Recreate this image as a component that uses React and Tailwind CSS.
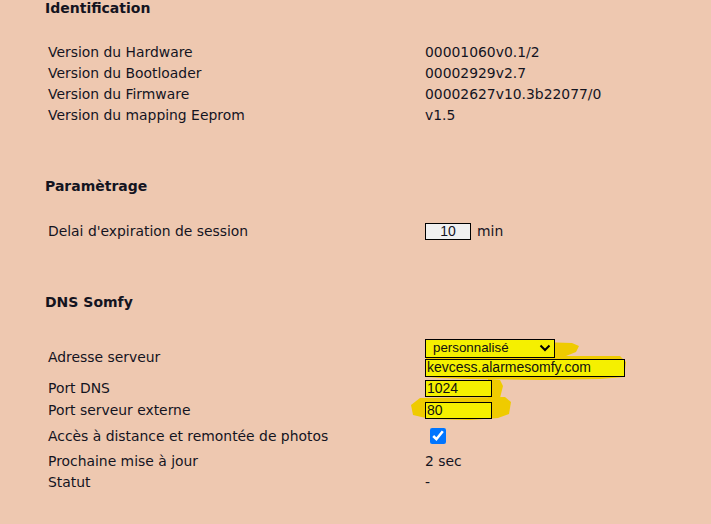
import React from "react";

const Heading = ({ children, className = "" }) => (
  <div className={`h-4 leading-4 pl-[45px] font-bold text-[14px] ${className}`}>
    {children}
  </div>
);

const Row = ({ label, children, className = "h-[21px]" }) => (
  <div className={`flex items-center ${className}`}>
    <div className="w-[425px] pl-[48px] shrink-0 whitespace-nowrap">{label}</div>
    <div className="flex-1">{children}</div>
  </div>
);

const inputBase =
  "block border border-black bg-[#f5f000] text-[13.33px] text-[#111] outline-none px-px";

export default function App() {
  const versions = [
    ["Version du Hardware", "00001060v0.1/2"],
    ["Version du Bootloader", "00002929v2.7"],
    ["Version du Firmware", "00002627v10.3b22077/0"],
    ["Version du mapping Eeprom", "v1.5"],
  ];

  return (
    <div
      className="relative w-[711px] h-[524px] overflow-hidden bg-[#eec8b0] text-[13.9px] text-[#14141f]"
      style={{ fontFamily: "'DejaVu Sans', Verdana, sans-serif" }}
    >
      {/* yellow marker strokes */}
      <svg className="absolute left-0 top-0 pointer-events-none" width="711" height="524">
        <path
          d="M540 342 L572 343 L579 346 L576 352 L566 356 L620 356 L626 362 L624 377 L600 379 L540 380 L470 379 L440 378 L428 377 L426 358 L545 357 Z"
          fill="#efcb00"
        />
        <path d="M488 379 L500 380 L503 386 L500 398 L488 399 Z" fill="#efcb00" />
        <path
          d="M420 398 L505 397 L511 402 L509 414 L498 418 L470 420 L430 419 L413 415 L411 405 Z"
          fill="#efcb00"
        />
      </svg>

      <div className="relative">
        <Heading>Identification</Heading>
        <div className="mt-[26px]">
          {versions.map(([label, value]) => (
            <Row key={label} label={label}>
              {value}
            </Row>
          ))}
        </div>

        <Heading className="mt-[52px]">Paramètrage</Heading>
        <Row label="Delai d'expiration de session" className="h-[21px] mt-[27px]">
          <div className="flex items-center gap-[6px]">
            <input
              defaultValue="10"
              className="block w-[46px] h-[17px] border border-black bg-[#f0f0f0] text-center text-[14px] px-px outline-none"
              style={{ fontFamily: "'Liberation Sans', Arial, sans-serif" }}
            />
            <span>min</span>
          </div>
        </Row>

        <Heading className="mt-[52px]">DNS Somfy</Heading>
        <Row label="Adresse serveur" className="h-[39px] mt-[28px]">
          <div className="flex flex-col gap-px" style={{ fontFamily: "'Liberation Sans', Arial, sans-serif" }}>
            <div className={`${inputBase} w-[130px] h-[19px] flex items-center justify-between pl-[7px] pr-[3px]`}>
              <span>personnalisé</span>
              <svg width="12" height="8" viewBox="0 0 12 8">
                <path d="M1.5 1.5 L6 6 L10.5 1.5" stroke="#000" strokeWidth="2" fill="none" />
              </svg>
            </div>
            <input
              defaultValue="kevcess.alarmesomfy.com"
              className={`${inputBase} w-[200px] h-[18px] text-[14px]`}
            />
          </div>
        </Row>
        <Row label="Port DNS" className="h-[22px]">
          <input
            defaultValue="1024"
            className={`${inputBase} w-[67px] h-[17px] text-[14px]`}
            style={{ fontFamily: "'Liberation Sans', Arial, sans-serif" }}
          />
        </Row>
        <Row label="Port serveur externe" className="h-[22px]">
          <input
            defaultValue="80"
            className={`${inputBase} w-[67px] h-[17px] text-[14px]`}
            style={{ fontFamily: "'Liberation Sans', Arial, sans-serif" }}
          />
        </Row>
        <Row label="Accès à distance et remontée de photos" className="h-[30px]">
          <input
            type="checkbox"
            defaultChecked
            className="block m-0 ml-[5px] w-4 h-4 accent-[#0075ff]"
          />
        </Row>
        <Row label="Prochaine mise à jour" className="h-[20px]">
          2 sec
        </Row>
        <Row label="Statut" className="h-[22px]">
          -
        </Row>
      </div>
    </div>
  );
}
